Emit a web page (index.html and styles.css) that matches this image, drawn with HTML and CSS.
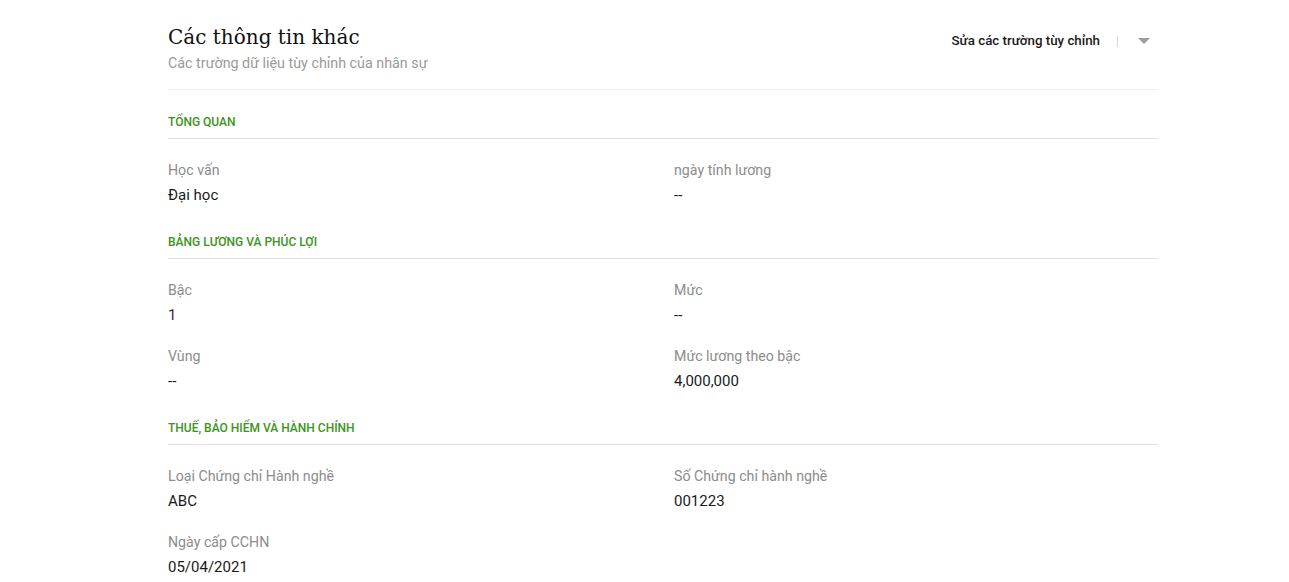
FILE: index.html
```html
<!DOCTYPE html>
<html lang="vi">
<head>
<meta charset="utf-8">
<link rel="stylesheet" href="styles.css">
</head>
<body>
<div class="page">
  <div class="head">
    <div class="head-text">
      <h1 class="title">Các thông tin khác</h1>
      <div class="subtitle">Các trường dữ liệu tùy chỉnh của nhân sự</div>
    </div>
    <div class="actions">
      <span class="edit">Sửa các trường tùy chỉnh</span>
      <span class="sep"></span>
      <span class="caret"></span>
    </div>
  </div>

  <div class="section">
    <div class="sec-title">TỔNG QUAN</div>
    <div class="fields">
      <div class="field"><div class="label">Học vấn</div><div class="value">Đại học</div></div>
      <div class="field"><div class="label">ngày tính lương</div><div class="value">--</div></div>
    </div>
  </div>

  <div class="section">
    <div class="sec-title">BẢNG LƯƠNG VÀ PHÚC LỢI</div>
    <div class="fields">
      <div class="field"><div class="label">Bậc</div><div class="value link">1</div></div>
      <div class="field"><div class="label">Mức</div><div class="value">--</div></div>
      <div class="field"><div class="label">Vùng</div><div class="value">--</div></div>
      <div class="field"><div class="label">Mức lương theo bậc</div><div class="value">4,000,000</div></div>
    </div>
  </div>

  <div class="section">
    <div class="sec-title">THUẾ, BẢO HIỂM VÀ HÀNH CHÍNH</div>
    <div class="fields">
      <div class="field"><div class="label">Loại Chứng chỉ Hành nghề</div><div class="value">ABC</div></div>
      <div class="field"><div class="label">Số Chứng chỉ hành nghề</div><div class="value">001223</div></div>
      <div class="field"><div class="label">Ngày cấp CCHN</div><div class="value">05/04/2021</div></div>
    </div>
  </div>
</div>
</body>
</html>
```
FILE: styles.css
```css
html, body {
  margin: 0;
  padding: 0;
  background: #fff;
}
body {
  font-family: Roboto, "Liberation Sans", Arial, sans-serif;
  color: #222;
}
.page {
  width: 990px;
  margin-left: 168px;
  padding-top: 23px;
}
.head {
  display: flex;
  justify-content: space-between;
  align-items: flex-start;
  padding-bottom: 16px;
  border-bottom: 1px solid #ececec;
}
.title {
  margin: 0;
  font-family: "DejaVu Serif", "Liberation Serif", serif;
  font-weight: 400;
  font-size: 20px;
  line-height: 28px;
  color: #111;
}
.subtitle {
  margin-top: 2px;
  font-size: 14.3px;
  line-height: 20px;
  color: #9a9a9a;
}
.actions {
  display: flex;
  align-items: center;
  margin-top: 8px;
  margin-right: 8px;
}
.edit {
  font-size: 13.3px;
  font-weight: 500;
  line-height: 20px;
  color: #1a1a1a;
}
.sep {
  width: 1px;
  height: 11px;
  background: #d6d6d6;
  margin-left: 17px;
  margin-right: 20px;
}
.caret {
  width: 0;
  height: 0;
  border-left: 6px solid transparent;
  border-right: 6px solid transparent;
  border-top: 6px solid #9e9e9e;
}
.section {
  padding-top: 24px;
}
.section + .section {
  padding-top: 29px;
}
.sec-title {
  font-size: 12px;
  font-weight: 500;
  line-height: 16px;
  color: #3b9420;
  padding-bottom: 8px;
  border-bottom: 1px solid #e0e0e0;
}
.fields {
  display: grid;
  grid-template-columns: 506px 1fr;
  row-gap: 21px;
  padding-top: 21px;
}
.label {
  font-size: 14.2px;
  line-height: 20px;
  color: #8c8c8c;
}
.value {
  margin-top: 5px;
  font-size: 15px;
  line-height: 20px;
  color: #1a1a1a;
}
.value.link {
  color: #4b1d4f;
}
```
